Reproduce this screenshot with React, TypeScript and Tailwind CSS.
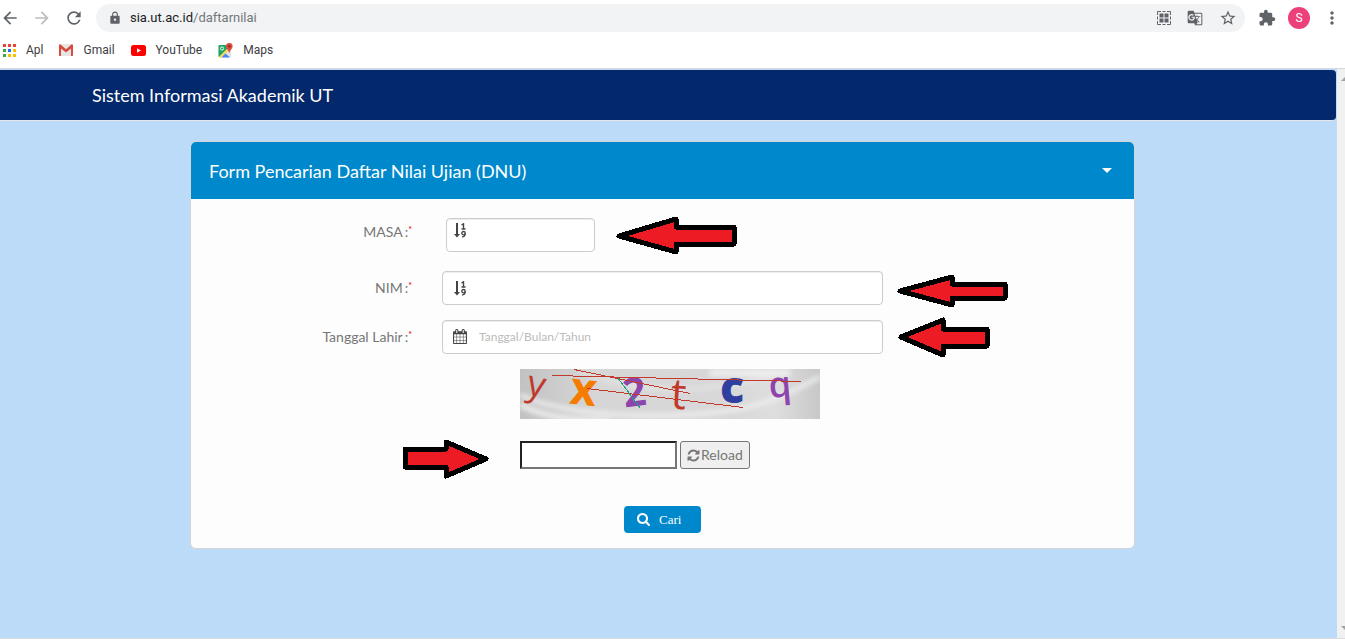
import type { ReactNode } from "react";
import {
  MdArrowBack,
  MdArrowForward,
  MdExtension,
  MdGTranslate,
  MdLock,
  MdMoreVert,
  MdRefresh,
  MdStarBorder,
} from "react-icons/md";

function AppsIcon() {
  const colors = ["#ea4335", "#ea4335", "#ea4335", "#34a853", "#1a73e8", "#fbbc04", "#34a853", "#fbbc04", "#fbbc04"];
  return (
    <svg width="13" height="13" viewBox="0 0 13 13" aria-hidden="true">
      {colors.map((c, i) => (
        <rect key={i} x={(i % 3) * 5} y={Math.floor(i / 3) * 5} width="3" height="3" fill={c} />
      ))}
    </svg>
  );
}

function GmailIcon() {
  return (
    <svg width="14" height="12" viewBox="0 0 14 12" aria-hidden="true">
      <rect width="14" height="12" rx="1" fill="#e6e6e6" />
      <path d="M0 .8 1.200.2 7 5.200 12.800.2 14 .8V11.200a.8.8 0 0 1-.8.8H12V4.400L7 8.600 2 4.400V12H.8a.8.8 0 0 1-.8-.8z" fill="#d94a3d" />
    </svg>
  );
}

function YouTubeIcon() {
  return (
    <svg width="15" height="11" viewBox="0 0 15 11" aria-hidden="true">
      <rect width="15" height="11" rx="2.500" fill="#f00" />
      <path d="M6 3.200v4.600l4-2.300z" fill="#fff" />
    </svg>
  );
}

function MapsIcon() {
  return (
    <svg width="15" height="15" viewBox="0 0 15 15" aria-hidden="true">
      <rect x="0.500" y="2" width="12.500" height="12.500" rx="1.200" fill="#dfe3e6" />
      <path d="M1.500 2H10L9 6 1 14a1 1 0 0 1-.5-1V3a1 1 0 0 1 1-1z" fill="#1fa463" />
      <path d="M1 14 10 5l1.500 1.500L3.500 14.500H2a1 1 0 0 1-1-.5z" fill="#fdd64b" />
      <path d="M3.500 14.500 7.500 10.500l4.500 4z" fill="#4a89f3" />
      <circle cx="4" cy="5.500" r="1.600" fill="none" stroke="#fff" strokeWidth="0.900" />
      <path d="M11.300 0a3.300 3.300 0 0 1 3.300 3.300c0 2.700-2.600 3.400-3.300 7-.7-3.600-3.300-4.300-3.300-7A3.300 3.300 0 0 1 11.300 0z" fill="#dc4b3e" />
      <circle cx="11.300" cy="3.300" r="1.200" fill="#8c2a22" />
    </svg>
  );
}

function QrIcon() {
  return (
    <svg width="14" height="14" viewBox="0 0 14 14" fill="#5f6368" aria-hidden="true">
      <path d="M.5 4V.5H4M10 .5h3.500V4M13.500 10v3.500H10M4 13.500H.5V10M5.500 .5h3M5.500 13.500h3M.5 5.500v3M13.500 5.500v3" fill="none" stroke="#5f6368" />
      <rect x="2.500" y="2.500" width="4" height="4" />
      <rect x="7.500" y="2.500" width="4" height="4" />
      <rect x="2.500" y="7.500" width="4" height="4" />
      <rect x="7.500" y="7.500" width="4" height="4" />
    </svg>
  );
}

function SortNumericIcon() {
  return (
    <svg width="12" height="15" viewBox="0 0 12 15" fill="none" stroke="#444" aria-hidden="true">
      <path d="M3 0v12" strokeWidth="2" />
      <path d="M0 11h6l-3 3.500z" fill="#444" stroke="none" />
      <path d="M7.500 2 9.500.8V6M7.500 6h4" strokeWidth="1.400" />
      <circle cx="9.500" cy="10.200" r="1.700" strokeWidth="1.300" />
      <path d="M11.200 10.200c0 2.300-1 3.700-3.200 3.700" strokeWidth="1.300" />
    </svg>
  );
}

function CalendarIcon() {
  return (
    <svg width="14" height="15" viewBox="64 0 1664 1792" fill="#444" className="mb-0.5" aria-hidden="true">
      <path d="M192 1664h288v-288h-288v288zm352 0h320v-288h-320v288zm-352-352h288v-320h-288v320zm352 0h320v-320h-320v320zm-352-384h288v-288h-288v288zm736 736h320v-288h-320v288zm-384-736h320v-288h-320v288zm768 736h288v-288h-288v288zm-384-352h320v-320h-320v320zm-352-864v-288q0-13-9.500-22.500t-22.500-9.500h-64q-13 0-22.500 9.500t-9.500 22.500v288q0 13 9.500 22.500t22.500 9.500h64q13 0 22.500-9.500t9.500-22.500zm736 864h288v-320h-288v320zm-384-384h320v-288h-320v288zm384 0h288v-288h-288v288zm32-480v-288q0-13-9.500-22.500t-22.500-9.500h-64q-13 0-22.500 9.500t-9.500 22.500v288q0 13 9.500 22.500t22.500 9.500h64q13 0 22.500-9.500t9.500-22.500zm384-64v1280q0 52-38 90t-90 38h-1408q-52 0-90-38t-38-90v-1280q0-52 38-90t90-38h128v-96q0-66 47-113t113-47h64q66 0 113 47t47 113v96h384v-96q0-66 47-113t113-47h64q66 0 113 47t47 113v96h128q52 0 90 38t38 90z" />
    </svg>
  );
}

function RefreshIcon() {
  return (
    <svg width="13" height="13" viewBox="64 64 1664 1664" fill="currentColor" aria-hidden="true">
      <path d="M1639 1056q0 5-1 7-64 268-268 434.500t-478 166.500q-146 0-282.500-55t-243.500-157l-129 129q-19 19-45 19t-45-19-19-45v-448q0-26 19-45t45-19h448q26 0 45 19t19 45-19 45l-137 137q71 66 161 102t187 36q134 0 250-65t186-179q11-17 53-117 8-23 30-23h192q13 0 22.500 9.500t9.500 22.500zm25-800v448q0 26-19 45t-45 19h-448q-26 0-45-19t-19-45 19-45l138-138q-148-137-349-137-134 0-250 65t-186 179q-11 17-53 117-8 23-30 23h-199q-13 0-22.500-9.500t-9.500-22.500v-7q65-268 270-434.500t480-166.500q146 0 284 55.500t245 156.500l130-129q19-19 45-19t45 19 19 45z" />
    </svg>
  );
}

function SearchIcon() {
  return (
    <svg width="13" height="13" viewBox="64 128 1664 1664" fill="currentColor" aria-hidden="true">
      <path d="M1216 832q0-185-131.500-316.500t-316.500-131.500-316.500 131.500-131.500 316.500 131.500 316.500 316.500 131.500 316.500-131.500 131.500-316.500zm512 832q0 52-38 90t-90 38q-54 0-90-38l-343-342q-179 124-399 124-143 0-273.500-55.500t-225-150-150-225-55.500-273.500 55.500-273.500 150-225 225-150 273.500-55.500 273.500 55.500 225 150 150 225 55.500 273.500q0 220-124 399l343 343q37 37 37 90z" />
    </svg>
  );
}

function RedArrow({ w, h, points, className = "" }: { w: number; h: number; points: string; className?: string }) {
  return (
    <svg width={w} height={h} viewBox={`0 0 ${w} ${h}`} className={`shrink-0 ${className}`} aria-hidden="true">
      <polygon points={points} fill="#ed1c24" stroke="#000" strokeWidth="5" strokeLinejoin="round" shapeRendering="crispEdges" />
    </svg>
  );
}

function Captcha() {
  return (
    <svg width="300" height="50" viewBox="0 0 300 50" role="img" aria-label="Captcha">
      <defs>
        <linearGradient id="metal" x1="0" y1="0" x2="1" y2="0">
          <stop offset="0" stopColor="#c2c2c2" />
          <stop offset="0.250" stopColor="#d6d6d6" />
          <stop offset="0.700" stopColor="#d8d8d8" />
          <stop offset="0.850" stopColor="#dedede" />
          <stop offset="1" stopColor="#c8c8c8" />
        </linearGradient>
        <filter id="soft" x="-10%" y="-50%" width="120%" height="200%">
          <feGaussianBlur stdDeviation="2.500" />
        </filter>
      </defs>
      <rect width="300" height="50" fill="url(#metal)" />
      <g filter="url(#soft)" fill="none" stroke="#f0f0f0">
        <path d="M0 26C40 44 110 50 180 45S270 22 300 8" strokeWidth="4" />
        <path d="M0 36C30 50 60 52 90 52" strokeWidth="5" />
        <path d="M60 2C120 26 190 26 260 4" strokeWidth="3" opacity="0.600" />
        <path d="M190 4H270" strokeWidth="6" />
      </g>
      <g fontFamily='"Open Sans", sans-serif' textAnchor="middle">
        <text transform="translate(14 27) rotate(12)" fontSize="36" fontWeight="500" fill="#c0392b">y</text>
        <text transform="translate(62 36) rotate(6)" fontSize="46" fontWeight="700" fill="#f57c00">x</text>
        <text transform="translate(116 37) rotate(-7)" fontSize="40" fontWeight="700" fill="#8e44ad">2</text>
        <text transform="translate(158 40) rotate(3)" fontSize="43" fontWeight="500" fill="#c0392b">t</text>
        <text transform="translate(212 34)" fontSize="45" fontWeight="800" fill="#303f9f">c</text>
        <text transform="translate(261 28) rotate(-5)" fontSize="36" fontWeight="600" fill="#8e44ad">q</text>
      </g>
      <path d="M32 6.500 281 12.500M54 .5 170 24.500M67 19.500 223 38.500" fill="none" stroke="#c0392b" shapeRendering="crispEdges" />
      <path d="M98 9 120 39" stroke="#16a085" shapeRendering="crispEdges" />
    </svg>
  );
}

function Bookmark({ icon, label }: { icon: ReactNode; label: string }) {
  return (
    <a href="#" className="flex items-center gap-2.5">
      {icon}
      {label}
    </a>
  );
}

function FieldLabel({ htmlFor, children, className = "" }: { htmlFor: string; children: ReactNode; className?: string }) {
  return (
    <label htmlFor={htmlFor} className={`w-[221px] shrink-0 text-right text-sm text-[#777] ${className}`}>
      {children}
      <span className="ml-0.5">:</span>
      <sup className="text-[9px] text-red-600">*</sup>
    </label>
  );
}

const box = "flex h-[34px] min-w-0 rounded border border-[#ccc] bg-white shadow-[inset_0_1px_1px_rgba(0,0,0,0.075)]";
const field = "min-w-0 flex-1 bg-transparent text-xs text-[#555] outline-none placeholder:text-[#bbb]";

export default function App() {
  return (
    <div className="flex min-h-screen flex-col bg-white font-['Lato',sans-serif]">
      <header className="border-b border-[#d5d7da] font-['Roboto',sans-serif] text-[#5f6368]">
        <div className="flex h-9 items-center pr-[3px]">
          <div className="flex w-24 items-center gap-3 text-[20px]">
            <button aria-label="Kembali"><MdArrowBack /></button>
            <button aria-label="Maju" className="text-[#babcbe]"><MdArrowForward /></button>
            <button aria-label="Muat ulang"><MdRefresh /></button>
          </div>
          <div className="flex h-7 flex-1 items-center rounded-full bg-[#f1f3f4] pl-3 pr-2">
            <MdLock className="mr-2 text-[14px]" />
            <span className="flex-1 text-[13px] text-[#73777b]">
              <span className="text-[#202124]">sia.ut.ac.id</span>/daftarnilai
            </span>
            <div className="flex items-center gap-4">
              <button aria-label="Kode QR"><QrIcon /></button>
              <button aria-label="Terjemahkan"><MdGTranslate size={16} /></button>
              <button aria-label="Bookmark"><MdStarBorder size={18} /></button>
            </div>
          </div>
          <div className="ml-[13px] flex items-center gap-3">
            <button aria-label="Ekstensi"><MdExtension size={18} /></button>
            <button aria-label="Profil" className="size-[22px] rounded-full bg-[#ec407a] text-xs text-white">S</button>
            <button aria-label="Menu"><MdMoreVert size={20} /></button>
          </div>
        </div>
        <nav className="flex h-8 items-center gap-4 px-[3px] pb-1 text-xs text-[#3c4043]">
          <Bookmark icon={<AppsIcon />} label="Apl" />
          <Bookmark icon={<GmailIcon />} label="Gmail" />
          <Bookmark icon={<YouTubeIcon />} label="YouTube" />
          <Bookmark icon={<MapsIcon />} label="Maps" />
        </nav>
      </header>

      <div className="flex flex-1 border-b border-[#ddd]">
        <main className="flex-1 bg-[#bbdbf8] pt-px">
          <div className="mr-px flex h-[51px] items-center rounded-r border-b border-[#e7e7e7] bg-[#03286b] pl-[92px] text-lg text-white">
            Sistem Informasi Akademik UT
          </div>
          <div className="mt-5 pr-3">
            <section className="mx-auto w-full max-w-[945px] overflow-hidden rounded-md border border-[#d5d5d5] bg-[#fdfdfd]">
              <div className="flex h-[57px] items-center justify-between bg-[#0088cc] pl-[18px] pr-[22px] text-white">
                <h1 className="text-lg">Form Pencarian Daftar Nilai Ujian (DNU)</h1>
                <button aria-label="Ciutkan">
                  <svg width="10" height="5" viewBox="0 0 10 5" aria-hidden="true"><path d="M0 0h10L5 5z" fill="#fff" /></svg>
                </button>
              </div>
              <form className="pb-[15px] pt-[19px]" onSubmit={(e) => e.preventDefault()}>
                <div className="mb-[19px] flex h-[34px] items-center">
                  <FieldLabel htmlFor="masa" className="self-start leading-7">MASA</FieldLabel>
                  <div className={`${box} ml-[34px] w-[149px] items-start gap-3 pl-[7px] pt-1`}>
                    <SortNumericIcon />
                    <input id="masa" className={field} />
                  </div>
                  <RedArrow w={122} h={39} className="ml-[21px]" points="3,20 60,3 60,11 118,11 118,28 60,28 60,36" />
                </div>
                <div className="mb-[15px] flex h-[34px] items-center">
                  <FieldLabel htmlFor="nim">NIM</FieldLabel>
                  <div className={`${box} ml-[30px] w-[441px] items-center gap-3 pl-[11px]`}>
                    <SortNumericIcon />
                    <input id="nim" className={field} />
                  </div>
                  <RedArrow w={112} h={35} className="ml-3.5 mt-1.5" points="3,17 55,3 55,10 108,10 108,24 55,24 55,31" />
                </div>
                <div className="mb-[15px] flex h-[34px] items-center">
                  <FieldLabel htmlFor="lahir">Tanggal Lahir</FieldLabel>
                  <div className={`${box} ml-[30px] w-[441px] items-center gap-3 pl-[10px]`}>
                    <CalendarIcon />
                    <input id="lahir" placeholder="Tanggal/Bulan/Tahun" className={field} />
                  </div>
                  <RedArrow w={93} h={41} className="ml-[15px]" points="3,20 45,3 45,12 89,12 89,29 45,29 45,38" />
                </div>
                <div className="mb-[22px] pl-[329px]">
                  <Captcha />
                </div>
                <div className="mb-[37px] flex h-7 items-center pl-[211px]">
                  <RedArrow w={88} h={40} className="mr-[30px] mt-2" points="3,10 44,10 44,3 84,20 44,37 44,28 3,28" />
                  <input
                    aria-label="Kode captcha"
                    className="h-7 w-[157px] border-2 border-b-[#767676] border-l-[#222] border-r-[#767676] border-t-[#222] bg-white px-1 text-sm outline-none"
                  />
                  <button type="button" className="ml-[3px] flex h-7 items-center gap-px rounded-[3px] border border-[#767676] bg-[#efefef] px-1.5 text-sm text-[#777]">
                    <RefreshIcon />
                    Reload
                  </button>
                </div>
                <div className="flex justify-center">
                  <button type="submit" className="flex h-[27px] w-[77px] items-center gap-[9px] rounded bg-[#0088cc] pl-[13px] font-['Liberation_Serif',serif] text-[13px] text-white">
                    <SearchIcon />
                    Cari
                  </button>
                </div>
              </form>
            </section>
          </div>
        </main>
        <div className="flex w-2 flex-col items-end justify-between overflow-hidden bg-[#f1f1f1] py-2">
          <svg width="4" height="4" viewBox="0 0 4 4" aria-hidden="true"><path d="M0 4 4 0v4z" fill="#a3a3a3" /></svg>
          <svg width="4" height="4" viewBox="0 0 4 4" aria-hidden="true"><path d="M0 0h4v4z" fill="#a3a3a3" /></svg>
        </div>
      </div>
    </div>
  );
}
